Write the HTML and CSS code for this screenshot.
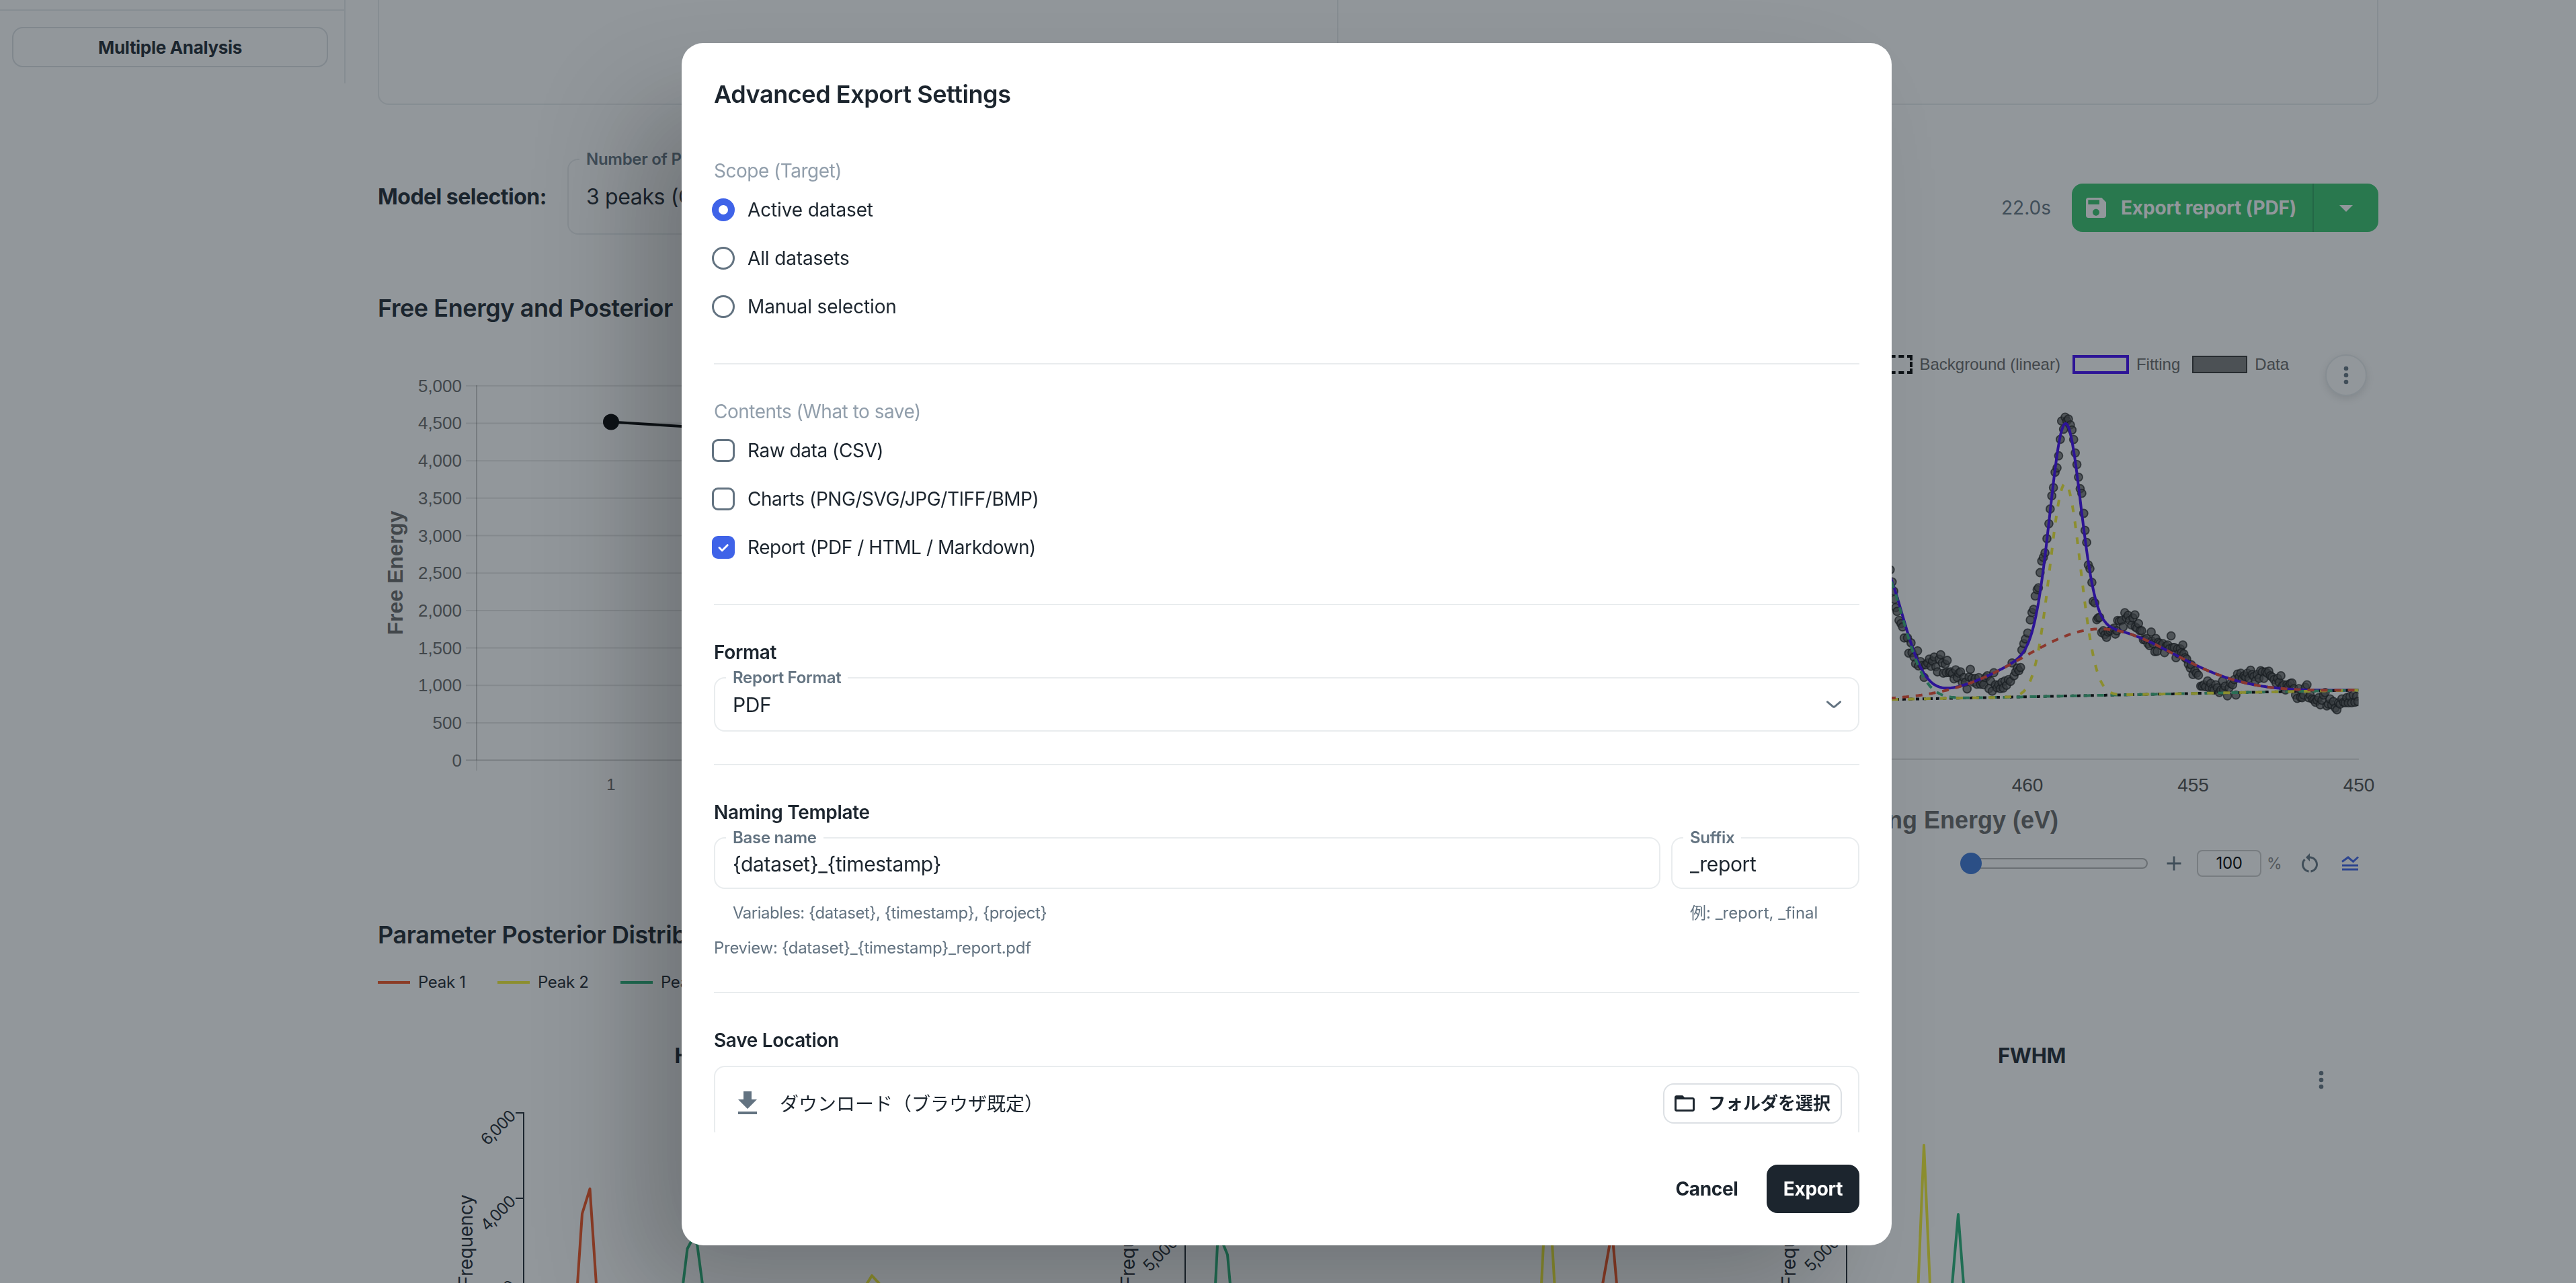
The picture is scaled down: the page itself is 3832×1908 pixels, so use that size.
FILE: index.html
```html
<!DOCTYPE html>
<html lang="en">

<head>
    <meta charset="UTF-8" />
    <title>Advanced Export Settings</title>
    <link rel="stylesheet" href="styles.css">
</head>

<body>
    <div class="app">
        <aside class="sidebar">
            <div class="sidebar-top"></div>
            <div class="sidebar-actions">
                <button class="btn-outline">Multiple Analysis</button>
            </div>
        </aside>

        <main class="main">
            <div class="upper-panel">
                <div></div>
                <div></div>
            </div>

            <div class="model-row">
                <span class="model-label">Model selection:</span>
                <fieldset class="model-select">
                    <legend>Number of Peaks</legend>
                    <span>3 peaks (Optimal)</span>
                </fieldset>
                <div class="model-actions">
                    <span class="elapsed">22.0s</span>
                    <div class="split-btn">
                        <button class="split-main">
                            <svg class="icon-40" viewBox="0 0 24 24"><path d="M17 3H5c-1.11 0-2 .9-2 2v14c0 1.1.89 2 2 2h14c1.1 0 2-.9 2-2V7l-4-4zm-5 16c-1.66 0-3-1.34-3-3s1.34-3 3-3 3 1.34 3 3-1.34 3-3 3zm3-10H5V5h10v4z"/></svg>
                            Export report (PDF)
                        </button>
                        <button class="split-arrow">
                            <svg class="icon-48" viewBox="0 0 24 24"><path d="M7 10l5 5 5-5z"/></svg>
                        </button>
                    </div>
                </div>
            </div>

            <h2 class="section-title title-energy">Free Energy and Posterior</h2>
            <div class="charts">
                <svg class="energy-chart" id="energyChart" viewBox="563 486 1428 876"></svg>
                <div class="fit-panel">
                    <div class="fit-legend">
                        <span class="box box-bg"></span><span>Background (linear)</span>
                        <span class="box box-fit"></span><span>Fitting</span>
                        <span class="box box-data"></span><span>Data</span>
                    </div>
                    <button class="fab">
                        <svg class="icon-40" viewBox="0 0 24 24"><circle cx="12" cy="6" r="2"/><circle cx="12" cy="12" r="2"/><circle cx="12" cy="18" r="2"/></svg>
                    </button>
                    <svg class="fit-chart" id="fitChart" viewBox="1991 598 1547 642"></svg>
                    <div class="zoom-row">
                        <div class="slider"><span class="thumb"></span></div>
                        <svg class="icon-plus" viewBox="0 0 24 24"><path d="M12 1.5v21M1.5 12h21"/></svg>
                        <span class="zoom-value">100</span>
                        <span class="zoom-unit">%</span>
                        <svg class="icon-reset" viewBox="0 0 24 24"><path d="M12 5V2L8 6l4 4V7c3.31 0 6 2.69 6 6 0 2.97-2.17 5.43-5 5.91v2.02c3.95-.49 7-3.85 7-7.93 0-4.42-3.58-8-8-8zm-6 8c0-1.65.67-3.15 1.76-4.24L6.34 7.34C4.9 8.79 4 10.79 4 13c0 4.08 3.05 7.44 7 7.93v-2.02c-2.83-.48-5-2.94-5-5.91z"/></svg>
                        <svg class="icon-lines" viewBox="0 0 36 36"><path d="M6 15.5L15 9l7.5 6.3L30 8.5M6 21h24M6 27h24"/></svg>
                    </div>
                </div>
            </div>

            <h2 class="section-title">Parameter Posterior Distribution</h2>
            <div class="peak-legend">
                <span class="peak peak-1">Peak 1</span>
                <span class="peak peak-2">Peak 2</span>
                <span class="peak peak-3">Peak 3</span>
            </div>
            <div class="posteriors">
                <div class="posterior">
                    <h3>Height</h3>
                    <svg class="posterior-chart" viewBox="0 0 985 314">
                        <path class="axis" d="M204 61h12v253M204 188h12"/>
                        <text class="tick" transform="translate(199 61) rotate(-45)" y="9">6,000</text>
                        <text class="tick" transform="translate(199 188) rotate(-45)" y="9">4,000</text>
                        <text class="tick" transform="translate(199 314) rotate(-45)" y="9">2,000</text>
                        <text class="axis-name" transform="translate(140 251) rotate(-90)">Frequency</text>
                        <polyline class="line red" points="296,316 303,211 314.5,174 324,316"/>
                        <polyline class="line green" points="453,316 459.5,263 467,249 474,256 482,316"/>
                        <polyline class="line yellow" points="726,316 734,303 746,316"/>
                    </svg>
                </div>
                <div class="posterior">
                    <h3>Center</h3>
                    <svg class="posterior-chart" viewBox="0 0 985 314">
                        <path class="axis" d="M203 249h12v65"/>
                        <text class="tick" transform="translate(199 249) rotate(-45)" y="9">5,000</text>
                        <text class="axis-name" transform="translate(140 251) rotate(-90)">Frequency</text>
                        <polyline class="line green" points="260,316 263,258 267,235 271.5,256 278,272 282,316"/>
                        <polyline class="line yellow" points="745,316 748,256 754,160 761,256 764.5,316"/>
                        <polyline class="line red" points="836,316 848,248 851,248 857,316"/>
                    </svg>
                </div>
                <div class="posterior">
                    <h3>FWHM</h3>
                    <svg class="kebab icon-40" viewBox="0 0 24 24"><circle cx="12" cy="6" r="2"/><circle cx="12" cy="12" r="2"/><circle cx="12" cy="18" r="2"/></svg>
                    <svg class="posterior-chart" viewBox="0 0 985 314">
                        <path class="axis" d="M202 249h12v65"/>
                        <text class="tick" transform="translate(198 249) rotate(-45)" y="9">5,000</text>
                        <text class="axis-name" transform="translate(138 251) rotate(-90)">Frequency</text>
                        <polyline class="line yellow" points="320.5,316 329,109 338,316"/>
                        <polyline class="line green" points="371,316 380,212 388,316"/>
                    </svg>
                </div>
            </div>
        </main>
    </div>

    <div class="backdrop">
        <div class="dialog">
            <h1 class="dialog-title">Advanced Export Settings</h1>
            <div class="dialog-content">
                <div class="group-label">Scope (Target)</div>
                <label class="option"><span class="radio checked"></span>Active dataset</label>
                <label class="option"><span class="radio"></span>All datasets</label>
                <label class="option"><span class="radio"></span>Manual selection</label>
                <hr>

                <div class="group-label">Contents (What to save)</div>
                <label class="option tight"><span class="checkbox"></span>Raw data (CSV)</label>
                <label class="option tight"><span class="checkbox"></span>Charts (PNG/SVG/JPG/TIFF/BMP)</label>
                <label class="option tight"><span class="checkbox checked"><svg viewBox="0 0 34 34"><path d="M11 17.5l4.2 4.2 8-8"/></svg></span>Report (PDF / HTML / Markdown)</label>
                <hr>

                <div class="group-title">Format</div>
                <fieldset class="field field-select">
                    <legend>Report Format</legend>
                    <span>PDF</span>
                    <svg viewBox="0 0 24 12"><path d="M2.5 1.8l8.3 7q1.2 1 2.4 0l8.3-7"/></svg>
                </fieldset>
                <hr>

                <div class="group-title">Naming Template</div>
                <div class="naming">
                    <div>
                        <fieldset class="field">
                            <legend>Base name</legend>
                            <span>{dataset}_{timestamp}</span>
                        </fieldset>
                        <div class="helper">Variables: {dataset}, {timestamp}, {project}</div>
                    </div>
                    <div>
                        <fieldset class="field">
                            <legend>Suffix</legend>
                            <span>_report</span>
                        </fieldset>
                        <div class="helper helper-suffix">例: _report, _final</div>
                    </div>
                </div>
                <div class="preview">Preview: {dataset}_{timestamp}_report.pdf</div>
                <hr>

                <div class="group-title">Save Location</div>
                <div class="location">
                    <svg class="icon-48" viewBox="0 0 24 24"><path d="M5 20h14v-2H5v2zM19 9h-4V3H9v6H5l7 7 7-7z"/></svg>
                    <span>ダウンロード（ブラウザ既定）</span>
                    <button class="btn-folder">
                        <svg viewBox="0 0 24 24"><path d="M20 6h-8l-2-2H4c-1.1 0-1.99.9-1.99 2L2 18c0 1.1.9 2 2 2h16c1.1 0 2-.9 2-2V8c0-1.1-.9-2-2-2zm0 12H4V8h16v10z"/></svg>
                        フォルダを選択
                    </button>
                </div>
            </div>
            <div class="dialog-actions">
                <button class="btn-text">Cancel</button>
                <button class="btn-dark">Export</button>
            </div>
        </div>
    </div>

    <script src="script.js"></script>
</body>

</html>
```
FILE: styles.css
```css
* {
    box-sizing: border-box;
    letter-spacing: -0.012em;
}

body {
    margin: 0;
    height: 1908px;
    overflow: hidden;
    font-family: Inter, "Noto Sans CJK JP", sans-serif;
    font-size: 28px;
    color: #1c252e;
    background-color: #fff;
}

button {
    font-family: inherit;
    font-weight: 700;
    color: inherit;
    padding: 0;
    border: none;
    background: none;
    border-radius: 16px;
    cursor: pointer;
}

svg {
    display: block;
    flex-shrink: 0;
}

.icon-40 {
    width: 40px;
    height: 40px;
    fill: currentColor;
}

.icon-48 {
    width: 48px;
    height: 48px;
    fill: currentColor;
}

/* Page */
.app {
    display: flex;
    height: 1908px;
    overflow: hidden;
}

.sidebar {
    width: 514px;
    height: 124px;
    border-right: 2px solid rgba(145, 158, 171, 0.2);
}

.sidebar-top {
    height: 16px;
    border-bottom: 2px solid rgba(145, 158, 171, 0.2);
}

.sidebar-actions {
    padding: 24px 24px 24px 18px;
}

.btn-outline {
    width: 470px;
    height: 60px;
    border: 2px solid rgba(145, 158, 171, 0.32);
    font-size: 26px;
}

.main {
    width: 2975px;
    margin-left: 48px;
}

.upper-panel {
    display: grid;
    grid-template-columns: 1427px 1fr;
    width: 2976px;
    height: 156px;
    border: 2px solid rgba(145, 158, 171, 0.2);
    border-top: none;
    border-radius: 0 0 16px 16px;
}

.upper-panel div:first-child {
    border-right: 2px solid rgba(145, 158, 171, 0.2);
}

.model-row {
    display: flex;
    align-items: center;
    width: 2976px;
    height: 112px;
    margin-top: 81px;
}

.model-label {
    width: 282px;
    margin-top: -2px;
    font-size: 32px;
    font-weight: 700;
    letter-spacing: -0.016em;
    white-space: nowrap;
}

.model-select {
    width: 440px;
    height: 126px;
    margin: -14px 0 0;
    padding: 22px 16px 0;
    border: 2px solid rgba(145, 158, 171, 0.2);
    border-radius: 16px;
    font-size: 32px;
    line-height: 40px;
}

.model-select span {
    padding-left: 10px;
}

.model-select legend {
    padding: 0 10px;
    font-size: 24px;
    font-weight: 600;
    line-height: 28px;
    color: #637381;
}

.model-actions {
    display: flex;
    align-items: center;
    gap: 31px;
    margin: 32px 0 0 auto;
}

.elapsed {
    letter-spacing: 0;
    color: #637381;
}

.split-btn {
    display: flex;
    width: 456px;
    height: 72px;
    color: #fff;
    background-color: #36c46c;
    border-radius: 16px;
}

.split-main {
    display: flex;
    align-items: center;
    gap: 17px;
    width: 360px;
    padding-left: 16px;
    border-right: 2px solid #2ca35c;
    border-radius: 0;
    font-size: 28px;
    letter-spacing: -0.006em;
    white-space: nowrap;
}

.split-arrow {
    display: flex;
    align-items: center;
    justify-content: center;
    flex: 1;
}

.section-title {
    margin: 0;
    font-size: 36px;
    font-weight: 600;
    line-height: 56px;
}

.title-energy {
    margin-top: 81px;
}

.charts {
    display: grid;
    grid-template-columns: 1428px 1547px;
    height: 876px;
    padding-left: 1px;
}

.energy-chart {
    width: 1428px;
    height: 876px;
}

.energy-chart text,
.fit-chart text {
    font-family: "Liberation Sans", sans-serif;
    letter-spacing: 0;
    fill: #666;
}

.fit-chart .x-tick {
    fill: #4c4c4c;
}

.fit-panel {
    position: relative;
}

.fit-legend {
    display: flex;
    align-items: center;
    justify-content: flex-end;
    height: 112px;
    padding-right: 133px;
    font-family: "Liberation Sans", sans-serif;
    font-size: 24px;
    color: #666;
}

.fit-legend span {
    letter-spacing: 0;
}

.box {
    height: 28px;
    margin: 0 11px 0 18px;
}

.box-bg {
    width: 84px;
    border: 4px dashed #000;
}

.box-fit {
    width: 84px;
    border: 4px solid #3f05f5;
}

.box-data {
    width: 82px;
    height: 26px;
    border: 2px solid #333;
    background-color: #7a7a7a;
}

.fab {
    position: absolute;
    top: 41px;
    right: 17px;
    display: flex;
    align-items: center;
    justify-content: center;
    width: 62px;
    height: 62px;
    border: 2px solid rgba(145, 158, 171, 0.2);
    border-radius: 50%;
    color: #637381;
    box-shadow: 0 4px 12px rgba(0, 0, 0, 0.12);
}

.fit-chart {
    width: 1547px;
    height: 642px;
}

.zoom-row {
    display: flex;
    align-items: center;
    justify-content: flex-end;
    height: 88px;
    padding-right: 24px;
    color: #637381;
}

.slider {
    position: relative;
    width: 278px;
    height: 16px;
    margin-right: 27px;
    border: 2px solid #b2b2b2;
    border-radius: 8px;
    background-color: #fcfcfc;
}

.thumb {
    position: absolute;
    top: -10px;
    left: -3px;
    width: 32px;
    height: 32px;
    border-radius: 50%;
    background-color: #3b76d6;
}

.icon-plus {
    width: 24px;
    height: 24px;
    margin-right: 22px;
    stroke: currentColor;
    stroke-width: 2.8;
}

.zoom-value {
    width: 96px;
    height: 40px;
    margin-right: 8px;
    border: 2px solid #ccc;
    border-radius: 8px;
    font-size: 24px;
    line-height: 36px;
    text-align: center;
    color: #000;
}

.zoom-unit {
    width: 22px;
    margin-right: 24px;
    font-size: 23px;
    color: #888;
}

.icon-reset {
    width: 36px;
    height: 36px;
    margin-right: 24px;
    fill: currentColor;
}

.icon-lines {
    width: 36px;
    height: 36px;
    fill: none;
    stroke: #3f63e8;
    stroke-width: 3;
}

.peak-legend {
    display: flex;
    height: 36px;
    margin-top: 25px;
    font-size: 24px;
    line-height: 36px;
}

.peak {
    display: flex;
    align-items: center;
    gap: 12px;
    width: 178px;
    letter-spacing: -0.014em;
}

.peak::before {
    content: "";
    width: 48px;
    height: 4px;
    background-color: currentColor;
}

.peak-1::before {
    background-color: #f1511f;
}

.peak-2 {
    width: 183px;
}

.peak-2::before {
    background-color: #f3ee30;
}

.peak-3::before {
    background-color: #26b177;
}

.posteriors {
    display: grid;
    grid-template-columns: repeat(3, 985px);
    margin-top: 67px;
    padding-left: 1px;
}

.posterior {
    position: relative;
}

.posterior h3 {
    margin: 0;
    padding-right: 6px;
    font-size: 31px;
    font-weight: 700;
    line-height: 48px;
    text-align: center;
}

.kebab {
    position: absolute;
    top: 40px;
    right: 45px;
    color: #637381;
}

.posterior-chart {
    width: 985px;
    height: 314px;
}

.posterior-chart text {
    fill: #1c252e;
}

.posterior-chart .tick {
    font-size: 24px;
    letter-spacing: -0.04em;
    text-anchor: end;
}

.axis-name {
    font-size: 28px;
    text-anchor: middle;
}

.axis {
    fill: none;
    stroke: #1c252e;
    stroke-width: 2;
}

.line {
    fill: none;
    stroke-width: 4;
    stroke-linejoin: round;
}

.red {
    stroke: #f1511f;
}

.yellow {
    stroke: #f3ee30;
}

.green {
    stroke: #26b177;
}

/* Dialog */
.backdrop {
    position: fixed;
    inset: 0;
    display: flex;
    align-items: flex-start;
    padding: 64px 0 0 1014px;
    background-color: rgba(28, 37, 46, 0.48);
}

.dialog {
    width: 1800px;
    height: 1788px;
    padding: 48px;
    border-radius: 32px;
    background-color: #fff;
    box-shadow: -80px 80px 160px -16px rgba(0, 0, 0, 0.24);
}

.dialog-title {
    margin: 0 0 48px;
    font-size: 36px;
    font-weight: 600;
    line-height: 56px;
}

.dialog-content {
    height: 1468px;
    margin: 0 -8px;
    padding: 16px 8px 0;
    overflow: hidden;
}

hr {
    height: 2px;
    margin: 48px 0;
    border: none;
    background-color: #e9ecee;
}

.group-label {
    line-height: 44px;
    letter-spacing: -0.018em;
    color: #919eab;
}

.group-title {
    margin-bottom: 16px;
    font-weight: 600;
    line-height: 44px;
}

.option {
    display: flex;
    align-items: center;
    gap: 19px;
    height: 72px;
    margin-left: -3px;
    letter-spacing: -0.005em;
}

.option.tight {
    letter-spacing: -0.016em;
}

.radio {
    width: 34px;
    height: 34px;
    border: 3px solid #637381;
    border-radius: 50%;
}

.radio.checked {
    border: 10px solid #3f63e8;
}

.checkbox {
    width: 34px;
    height: 34px;
    border: 3px solid #637381;
    border-radius: 9px;
}

.checkbox.checked {
    border: none;
    background-color: #3f63e8;
}

.checkbox svg {
    fill: none;
    stroke: #fff;
    stroke-width: 3;
    stroke-linecap: round;
    stroke-linejoin: round;
}

.field {
    display: flex;
    align-items: flex-start;
    height: 90px;
    margin: -14px 0 0;
    padding: 0 24px 0 16px;
    border: 2px solid #e9ecee;
    border-radius: 16px;
    font-size: 30px;
    line-height: 40px;
}

.field legend {
    padding: 0 10px;
    font-size: 24px;
    font-weight: 600;
    line-height: 28px;
    color: #637381;
}

.field span {
    padding: 5px 0 0 10px;
}

.field-select {
    height: 94px;
}

.field-select span {
    padding-top: 6px;
}

.field-select svg {
    width: 24px;
    height: 12px;
    margin: 20px 0 0 auto;
    fill: none;
    stroke: #637381;
    stroke-width: 3;
    stroke-linecap: round;
}

.naming {
    display: grid;
    grid-template-columns: 1fr 280px;
    gap: 16px;
}

.helper,
.preview {
    font-size: 24px;
    line-height: 36px;
    color: #637381;
}

.helper {
    padding: 18px 0 0 28px;
    letter-spacing: -0.02em;
}

.helper-suffix {
    letter-spacing: 0;
}

.preview {
    height: 51px;
    padding-top: 16px;
}

.location {
    display: flex;
    align-items: center;
    height: 112px;
    padding: 0 24px;
    border: 2px solid #e9ecee;
    border-radius: 16px;
}

.location .icon-48 {
    margin-right: 24px;
    color: #637381;
}

.location span,
.btn-folder {
    letter-spacing: 0;
}

.location span {
    margin-top: -3px;
}

.btn-folder {
    display: flex;
    align-items: center;
    gap: 17px;
    height: 60px;
    margin-left: auto;
    padding: 0 15px 0 12px;
    border: 2px solid rgba(145, 158, 171, 0.32);
    font-size: 26px;
    line-height: 56px;
}

.btn-folder svg {
    width: 36px;
    height: 36px;
    fill: currentColor;
}

.dialog-actions {
    display: flex;
    justify-content: flex-end;
    gap: 16px;
    padding-top: 48px;
}

.dialog-actions button {
    height: 72px;
    font-size: 28px;
}

.btn-text {
    width: 146px;
}

.dialog-actions .btn-dark {
    width: 138px;
    color: #fff;
    background-color: #1c252e;
}
```
FILE: script.js
```javascript
const NS = 'http://www.w3.org/2000/svg';

function add(parent, tag, attrs, text) {
    const el = document.createElementNS(NS, tag);
    for (const key in attrs) el.setAttribute(key, attrs[key]);
    if (text !== undefined) el.textContent = text;
    parent.appendChild(el);
    return el;
}

// Free energy chart
const energy = document.getElementById('energyChart');
for (let i = 0; i <= 10; i++) {
    const y = 573.8 + i * 55.68;
    add(energy, 'line', { x1: 693, x2: 1960, y1: y, y2: y, stroke: i === 10 ? 'rgba(0,0,0,.2)' : 'rgba(0,0,0,.1)', 'stroke-width': 2 });
    add(energy, 'text', { x: 687, y: y + 9, 'text-anchor': 'end', 'font-size': 26 }, (5000 - i * 500).toLocaleString('en-US'));
}
add(energy, 'line', { x1: 709, x2: 709, y1: 573, y2: 1130, stroke: 'rgba(0,0,0,.2)', 'stroke-width': 2 });
add(energy, 'line', { x1: 709, x2: 709, y1: 1130, y2: 1146, stroke: 'rgba(0,0,0,.1)', 'stroke-width': 2 });
add(energy, 'text', { x: 909, y: 1175, 'text-anchor': 'middle', 'font-size': 24 }, '1');
add(energy, 'text', { transform: 'translate(599 852) rotate(-90)', 'text-anchor': 'middle', 'font-size': 32, 'font-weight': 700 }, 'Free Energy');
add(energy, 'polyline', { points: '909,627.6 1110,640 1310,900', fill: 'none', stroke: '#000', 'stroke-width': 4 });
add(energy, 'circle', { cx: 909, cy: 627.6, r: 12, fill: '#000' });

// Fitting chart
const fit = document.getElementById('fitChart');
const px = x => 2790 + x / 2.063;
const py = y => 540 + y / 2.613;
const gauss = (x, h, c, s) => h * Math.exp(-((x - c) ** 2) / (2 * s * s));
const background = x => 1307 - (x - 50) * 0.0252;
const peak1 = x => gauss(x, 258, 685, 228);
const peak2 = x => gauss(x, 826, 582, 47);
const peak3 = x => gauss(x, 530, 10, 72);

const data = [
    [45, 803], [51, 850], [56, 886], [58, 918], [62, 950], [66, 965], [72, 1000], [78, 1012], [83, 1025], [88, 1068],
    [98, 1068], [109, 1087], [102, 1127], [112, 1125], [129, 1118], [118, 1142], [123, 1168], [132, 1177], [138, 1160],
    [143, 1175], [149, 1221], [154, 1172], [160, 1165], [165, 1150], [170, 1178], [175, 1158], [180, 1142], [185, 1180],
    [190, 1200], [195, 1150], [200, 1133], [205, 1165], [208, 1205], [214, 1170], [220, 1155], [217, 1203], [226, 1203],
    [230, 1200], [236, 1206], [241, 1227], [246, 1192], [251, 1222], [256, 1205], [261, 1200], [266, 1240], [271, 1222],
    [276, 1240], [281, 1266], [287, 1220], [291, 1190], [296, 1225], [301, 1240], [306, 1225], [311, 1248], [317, 1222],
    [322, 1248], [327, 1240], [332, 1250], [338, 1222], [343, 1215], [348, 1265], [353, 1235], [358, 1275], [363, 1203],
    [368, 1250], [373, 1262], [378, 1250], [383, 1265], [388, 1240], [392, 1263], [397, 1235], [402, 1252], [408, 1230],
    [414, 1237], [419, 1165], [425, 1215], [430, 1200], [435, 1185], [440, 1195], [445, 1183], [449, 1115], [455, 1090],
    [460, 1072], [467, 1049], [475, 998], [480, 969], [485, 957], [490, 905], [496, 880], [500, 873], [505, 814],
    [510, 769], [515, 755], [520, 737], [526, 682], [532, 624], [536, 567], [541, 516], [546, 484], [551, 424],
    [557, 407], [562, 360], [567, 296], [577, 257], [571, 225], [582, 210], [587, 225], [592, 217], [598, 240],
    [603, 260], [608, 297], [613, 349], [618, 394], [623, 443], [628, 488], [633, 506], [639, 584], [643, 650],
    [648, 697], [653, 784], [658, 799], [664, 852], [668, 926], [673, 932], [679, 997], [683, 990], [688, 988],
    [694, 1047], [699, 1040], [704, 1055], [709, 1066], [714, 1045], [720, 1040], [726, 1035], [731, 1030], [736, 1053],
    [741, 1040], [743, 1000], [748, 1003], [755, 1000], [760, 1025], [765, 970], [770, 990], [775, 980], [780, 1000],
    [786, 1018], [790, 990], [796, 978], [797, 1025], [802, 1030], [807, 1012], [812, 1040], [817, 1040], [822, 1075],
    [827, 1075], [832, 1070], [836, 1090], [841, 1098], [846, 1045], [848, 1080], [852, 1090], [857, 1121], [860, 1070],
    [864, 1120], [868, 1085], [872, 1090], [877, 1098], [882, 1090], [887, 1125], [892, 1100], [897, 1095], [902, 1110],
    [907, 1060], [912, 1105], [917, 1105], [922, 1145], [927, 1110], [930, 1130], [935, 1110], [939, 1125], [943, 1095],
    [946, 1130], [950, 1145], [955, 1150], [960, 1170], [966, 1185], [969, 1172], [974, 1210], [980, 1195], [985, 1205],
    [991, 1213], [998, 1255], [1003, 1255], [1008, 1250], [1013, 1258], [1019, 1235], [1024, 1262], [1029, 1245],
    [1034, 1265], [1039, 1270], [1044, 1250], [1049, 1262], [1055, 1280], [1060, 1270], [1065, 1235], [1068, 1270],
    [1073, 1255], [1080, 1293], [1085, 1262], [1090, 1245], [1096, 1250], [1106, 1290], [1101, 1230], [1111, 1208],
    [1116, 1220], [1121, 1205], [1126, 1225], [1131, 1215], [1136, 1220], [1141, 1205], [1146, 1225], [1151, 1193],
    [1156, 1210], [1161, 1218], [1166, 1235], [1171, 1210], [1177, 1225], [1182, 1195], [1187, 1200], [1192, 1225],
    [1197, 1200], [1202, 1205], [1207, 1197], [1212, 1215], [1217, 1220], [1223, 1230], [1229, 1243], [1234, 1225],
    [1239, 1240], [1244, 1215], [1248, 1255], [1253, 1250], [1258, 1270], [1263, 1250], [1268, 1255], [1273, 1245],
    [1278, 1243], [1284, 1265], [1289, 1290], [1294, 1303], [1299, 1265], [1304, 1298], [1309, 1300], [1314, 1290],
    [1319, 1260], [1324, 1250], [1329, 1300], [1334, 1290], [1340, 1305], [1345, 1308], [1350, 1318], [1355, 1310],
    [1360, 1300], [1365, 1328], [1370, 1310], [1375, 1290], [1380, 1280], [1385, 1332], [1390, 1325], [1395, 1305],
    [1400, 1328], [1405, 1315], [1411, 1340], [1416, 1347], [1421, 1320], [1426, 1325], [1431, 1305], [1436, 1318],
    [1441, 1320], [1446, 1300], [1451, 1320], [1456, 1295], [1461, 1320], [1466, 1290], [1471, 1318], [1476, 1295],
    [1480, 1315]
];

const clip = add(add(fit, 'defs', {}), 'clipPath', { id: 'plotArea' });
add(clip, 'rect', { x: 1991, y: 598, width: px(1482) - 1991, height: 540 });
const plot = add(fit, 'g', { 'clip-path': 'url(#plotArea)' });

function curve(fn, color, dash, width) {
    const points = [];
    for (let x = 0; x <= 1484; x += 4) points.push(px(x).toFixed(1) + ',' + py(fn(x)).toFixed(1));
    add(plot, 'polyline', { points: points.join(' '), fill: 'none', stroke: color, 'stroke-width': width || 4, 'stroke-dasharray': dash || 'none' });
}

data.forEach(([x, y]) => {
    add(plot, 'circle', { cx: px(x), cy: py(y), r: 6, fill: 'rgba(80,80,80,.72)', stroke: 'rgba(20,20,20,.7)', 'stroke-width': 1.8 });
});
curve(x => background(x) - peak1(x) - peak2(x) - peak3(x), '#3f05f5', null, 4);
curve(background, '#000', '5 5');
curve(x => background(x) - peak3(x), '#38b07a', '10 10');
curve(x => background(x) - peak2(x), '#f3ee30', '10 14');
curve(x => background(x) - peak1(x), '#f14a2f', '10 10');

add(fit, 'line', { x1: 2093, x2: 3509, y1: 1129, y2: 1129, stroke: 'rgba(0,0,0,.12)', 'stroke-width': 2 });
for (let i = 0; i < 6; i++) {
    add(fit, 'text', { x: 3509 - i * 246.5, y: 1177, 'text-anchor': 'middle', 'font-size': 28, class: 'x-tick' }, 450 + i * 5);
}
add(fit, 'text', { x: 3062, y: 1232, 'text-anchor': 'end', 'font-size': 36, 'font-weight': 700 }, 'Binding Energy (eV)');
```
